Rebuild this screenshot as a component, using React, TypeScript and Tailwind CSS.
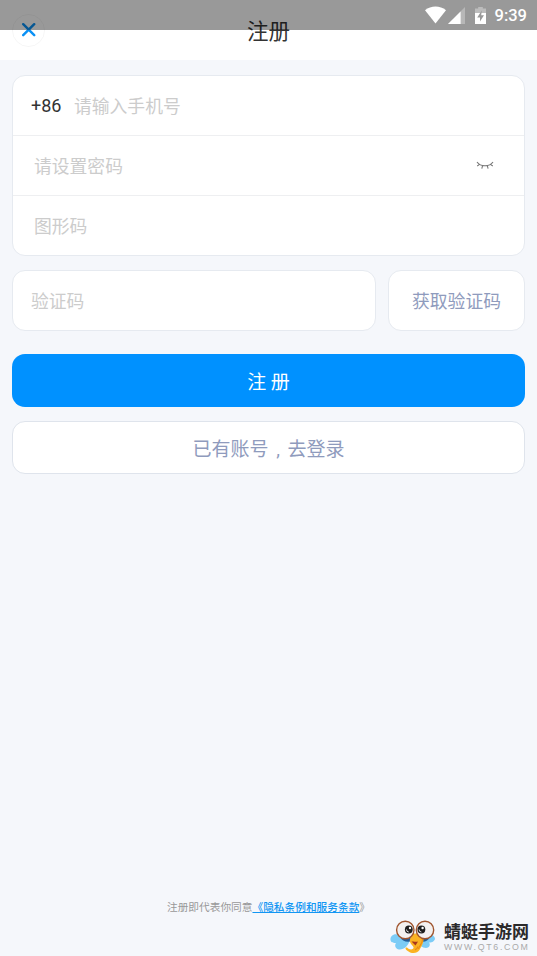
import React, { useState } from 'react';

const fontStack = "font-['Roboto','Noto_Sans_CJK_SC',sans-serif]";

const StatusBar: React.FC = () => (
  <div className="absolute inset-x-0 top-0 z-10 h-[30px] bg-black/40 pointer-events-none flex items-center justify-end pr-[10px]">
    <svg className="w-[21px] h-[18px]" viewBox="0 0 21 18" fill="#fff">
      <path d="M0 4.2C6 -.8 15 -.8 21 4.2L10.5 17.4Z" />
    </svg>
    <svg className="w-[17px] h-[17px] ml-[2px]" viewBox="0 0 17 17">
      <path d="M17 0V17H0Z" fill="#fff" fillOpacity=".3" />
      <path d="M12.6 4.4V17H0Z" fill="#fff" />
    </svg>
    <svg className="w-[11px] h-[17px] ml-[10px]" viewBox="0 0 11 17">
      <path d="M3.2 0H7.8V1.6H11V6H0V1.6H3.2Z" fill="#fff" fillOpacity=".35" />
      <path d="M0 6H11V17H0Z" fill="#fff" />
      <path d="M6.8 3.6L2.2 10.5H5V14.5L9 8.3H6.2Z" fill="#999" />
    </svg>
    <span className="ml-[9px] pt-[3px] text-[16.5px] leading-none font-medium text-white">9:39</span>
  </div>
);

const EyeClosed: React.FC = () => (
  <svg className="w-[18px] h-[9px]" viewBox="0 0 18 9" fill="none" stroke="#777" strokeWidth="1.1">
    <path d="M1 1C4.5 6 13.5 6 17 1M3.6 3.4L1.2 5M6.6 4.7L5.8 7.6M11.3 4.7L12.1 7.6M14.3 3.4L16.8 5" />
  </svg>
);

const Mascot: React.FC = () => (
  <svg className="w-[46px] h-[34px]" viewBox="0 0 46 34">
    <path d="M9 15C4 13 0 16 .5 20C1 23 4 23 6 23C4 26 6 29 9 29.5C14 30 18 26 20 20Z" fill="#7cccf6" />
    <path d="M36 15C41 13 45 16 45 19C44 22 41 22.5 39 22.5C41 25 39 28 36 28C32 28 29 25 27 20Z" fill="#7cccf6" />
    <path d="M10 17L21 16L22 21C17 23 12 21 10 17ZM40 17L30 16L29 21C34 23 38 21 40 17Z" fill="#235f9c" />
    <path d="M22 15C20 18 19.5 20 20 22C21 25 24 26 23.5 28C23 30 19 30 17 27.5C15 27 15 29 17 30.5C21 34 27 34 29.5 30C31 27 34 23 33.5 18C32 14 25 12 22 15Z" fill="#fbb323" />
    <path d="M32.5 19C33 23 29 26 28.5 29M25 30C27 29.5 27.5 28 28 26.5" fill="none" stroke="#e98a14" strokeWidth="1.1" />
    <path d="M21.5 21.5C23 21.5 26 22 28 21.5L25.5 25.5Z" fill="#a9371c" />
    <circle cx="15.3" cy="10" r="8.7" fill="#f3f1f0" stroke="#a0552f" strokeWidth="1.4" />
    <circle cx="35" cy="10" r="8.7" fill="#f3f1f0" stroke="#a0552f" strokeWidth="1.4" />
    <circle cx="18.8" cy="9.5" r="3.9" fill="#1e1e1e" />
    <circle cx="31.4" cy="9.5" r="3.9" fill="#1e1e1e" />
    <circle cx="20" cy="8" r="1.2" fill="#fff" />
    <circle cx="32.6" cy="8" r="1.2" fill="#fff" />
    <path d="M16.5 9.5A2.4 2.4 0 0 0 18.8 12M29.1 9.5A2.4 2.4 0 0 0 31.4 12" fill="none" stroke="#fff" strokeWidth=".8" />
  </svg>
);

const inputClass = "min-w-0 flex-1 pt-[3px] bg-transparent outline-none text-[17.8px] text-[#333] placeholder:text-[#ccc]";

const App: React.FC = () => {
  const [phone, setPhone] = useState('');
  const [password, setPassword] = useState('');
  const [captcha, setCaptcha] = useState('');
  const [code, setCode] = useState('');

  return (
    <div className={`relative h-screen overflow-hidden bg-[#f5f7fb] flex flex-col ${fontStack}`}>
      <StatusBar />

      <header className="h-[60px] shrink-0 bg-white grid grid-cols-[1fr_auto_1fr] items-center px-[12px]">
        <button className="w-[33px] h-[33px] rounded-full border border-black/4 flex items-center justify-center">
          <svg className="w-[14px] h-[14px]" viewBox="0 0 14 14" stroke="#0a91f5" strokeWidth="2.4" strokeLinecap="round">
            <path d="M1.2 1.2L12.2 12.2M12.2 1.2L1.2 12.2" />
          </svg>
        </button>
        <h1 className="pt-[4px] text-[21.5px] leading-[30px] text-[#333]">注册</h1>
      </header>

      <main className="px-[12px] pt-[15px]">
        <div className="h-[181px] bg-white rounded-[13px] border border-[#e6eaf0] overflow-hidden">
          <label className="h-[60px] flex items-center pl-[18px] border-b border-[#eeeff1]">
            <span className="w-[43px] text-[18px] text-[#333]">+86</span>
            <input value={phone} onChange={e => setPhone(e.target.value)} placeholder="请输入手机号" className={inputClass} />
          </label>
          <div className="h-[60px] flex items-center pl-[21px] pr-[30px] border-b border-[#eeeff1]">
            <input type="password" value={password} onChange={e => setPassword(e.target.value)} placeholder="请设置密码" className={inputClass} />
            <EyeClosed />
          </div>
          <div className="h-[60px] flex items-center px-[21px]">
            <input value={captcha} onChange={e => setCaptcha(e.target.value)} placeholder="图形码" className={inputClass} />
          </div>
        </div>

        <div className="mt-[14px] h-[61px] flex gap-[12px]">
          <div className="flex-1 flex items-center bg-white rounded-[13px] border border-[#e6eaf0] px-[18px]">
            <input value={code} onChange={e => setCode(e.target.value)} placeholder="验证码" className={inputClass} />
          </div>
          <button className="w-[137px] pt-[4px] bg-white rounded-[13px] border border-[#e6eaf0] text-[17.8px] text-[#8f9bbd]">获取验证码</button>
        </div>

        <button className="mt-[23px] w-full h-[53px] pt-[5px] block rounded-[13px] bg-[#0091ff] text-[19px] text-white">注 册</button>
        <button className="mt-[14px] w-full h-[53px] pt-[5px] block rounded-[13px] bg-white border border-[#dfe4ec] text-[19px] text-[#8f9bbd]">
          已有账号<span className="inline-block w-[19px] text-center">,</span>去登录
        </button>
      </main>

      <footer className="mt-auto pb-[40px] text-center text-[10.7px] leading-[16px] text-[#999]">
        注册即代表你同意<a className="font-medium text-[#1296f3] underline">《隐私条例和服务条款</a>》
      </footer>

      {/* site watermark */}
      <div className="absolute right-[7px] bottom-[2px] flex items-center gap-[8px]">
        <Mascot />
        <div className="w-[86px]">
          <div className="text-[17px] leading-[20px] font-bold text-[#2c2a2b] whitespace-nowrap">蜻蜓手游网</div>
          <div className="font-['Liberation_Sans',sans-serif] text-[8.8px] leading-[10px] tracking-[1.7px] text-[#aaa] whitespace-nowrap">WWW.QT6.COM</div>
        </div>
      </div>
    </div>
  );
};

export default App;
